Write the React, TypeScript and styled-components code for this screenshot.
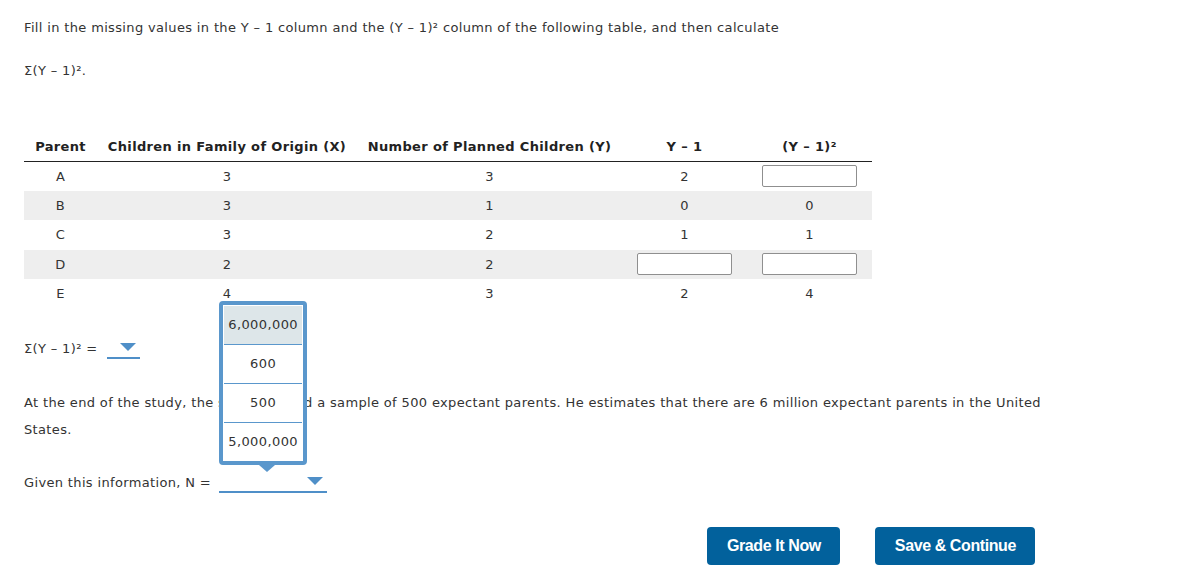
import React from "react";
import styled, { createGlobalStyle } from "styled-components";

const Global = createGlobalStyle`
  html, body { margin: 0; padding: 0; background: #fff; }
  body { font-family: "DejaVu Sans", Verdana, sans-serif; font-size: 13px; letter-spacing: 0.35px; color: #333; }
`;

const Page = styled.div`
  width: 1022px;
  padding: 0 0 0 24px;
`;

const Line = styled.div<{ $mt: number; $lh?: number }>`
  margin-top: ${(p) => p.$mt}px;
  line-height: ${(p) => p.$lh ?? 20}px;
`;

const Table = styled.table`
  margin-top: 52px;
  width: 848px;
  border-collapse: collapse;
`;

const Th = styled.th<{ $w: number }>`
  width: ${(p) => p.$w}px;
  height: 27px;
  padding: 0 0 1px;
  font-weight: bold;
  text-align: center;
  border-bottom: 1px solid #222;
  color: #222;
  white-space: nowrap;
`;

const Tr = styled.tr<{ $shade: boolean }>`
  background: ${(p) => (p.$shade ? "#eeeeee" : "#fff")};
  height: 29.4px;
`;

const Td = styled.td`
  padding: 0;
  text-align: center;
  vertical-align: middle;
`;

const Box = styled.span`
  display: inline-block;
  width: 93px;
  height: 20px;
  border: 1px solid #8f8f8f;
  border-radius: 2px;
  background: #fff;
  vertical-align: middle;
`;

const Select = styled.span<{ $w: number }>`
  position: relative;
  display: inline-block;
  width: ${(p) => p.$w}px;
  height: 17px;
  margin-left: ${(p) => (p.$w > 50 ? 8 : 10)}px;
  border-bottom: 2px solid #4f8fc8;
  vertical-align: -6px;
`;

const Arrow = styled.span`
  position: absolute;
  right: 4px;
  top: 3px;
  width: 0;
  height: 0;
  border-left: 8px solid transparent;
  border-right: 8px solid transparent;
  border-top: 8px solid #4f8fc8;
`;

const Popup = styled.div`
  position: absolute;
  left: 0;
  bottom: 26px;
  width: 80px;
  border: 4px solid #5a97cc;
  border-radius: 4px;
  background: #fff;
  padding: 0;
  z-index: 5;
`;

const Caret = styled.span`
  position: absolute;
  left: 36px;
  bottom: -11px;
  width: 0;
  height: 0;
  border-left: 8px solid transparent;
  border-right: 8px solid transparent;
  border-top: 7px solid #5a97cc;
`;

const Option = styled.div<{ $active?: boolean }>`
  height: 38px;
  line-height: 38px;
  text-align: center;
  letter-spacing: 0.4px;
  background: ${(p) => (p.$active ? "#dde6e9" : "#fff")};
  border-top: 1px solid #5a97cc;
  margin: 0 1px;
  &:first-child { border-top: none; margin-top: 1px; }
  &:last-child { margin-bottom: 1px; }
`;

const Footer = styled.div`
  display: flex;
  justify-content: flex-end;
  gap: 35px;
  margin-top: 34px;
  padding-right: 11px;
`;

const Button = styled.button`
  height: 38px;
  padding: 0 19px 0 20px;
  border: none;
  border-radius: 4px;
  background: #02619c;
  color: #fff;
  font-family: "Liberation Sans", Arial, sans-serif;
  font-weight: bold;
  font-size: 16px;
  letter-spacing: -0.4px;
`;

const rows = [
  { p: "A", x: "3", y: "3", y1: "2", y2: null },
  { p: "B", x: "3", y: "1", y1: "0", y2: "0" },
  { p: "C", x: "3", y: "2", y1: "1", y2: "1" },
  { p: "D", x: "2", y: "2", y1: null, y2: null },
  { p: "E", x: "4", y: "3", y1: "2", y2: "4" },
];

export default function App() {
  return (
    <>
      <Global />
      <Page>
        <Line $mt={18}>
          Fill in the missing values in the Y – 1 column and the (Y – 1)² column of the following table, and then calculate
        </Line>
        <Line $mt={23}>Σ(Y – 1)².</Line>
        <Table>
          <thead>
            <tr>
              <Th $w={73}>Parent</Th>
              <Th $w={260}>Children in Family of Origin (X)</Th>
              <Th $w={265}>Number of Planned Children (Y)</Th>
              <Th $w={125}>Y – 1</Th>
              <Th $w={125}>(Y – 1)²</Th>
            </tr>
          </thead>
          <tbody>
            {rows.map((r, i) => (
              <Tr key={r.p} $shade={i % 2 === 1}>
                <Td>{r.p}</Td>
                <Td>{r.x}</Td>
                <Td>{r.y}</Td>
                <Td>{r.y1 ?? <Box />}</Td>
                <Td>{r.y2 ?? <Box />}</Td>
              </Tr>
            ))}
          </tbody>
        </Table>
        <Line $mt={31}>
          Σ(Y – 1)² =
          <Select $w={33}>
            <Arrow />
          </Select>
        </Line>
        <Line $mt={30} $lh={27}>
          At the end of the study, the scientist used a sample of 500 expectant parents. He estimates that there are 6 million expectant parents in the United States.
        </Line>
        <Line $mt={30}>
          Given this information, N =
          <Select $w={108}>
            <Arrow />
            <Popup>
              <Option $active>6,000,000</Option>
              <Option>600</Option>
              <Option>500</Option>
              <Option>5,000,000</Option>
              <Caret />
            </Popup>
          </Select>
        </Line>
        <Footer>
          <Button>Grade It Now</Button>
          <Button>Save &amp; Continue</Button>
        </Footer>
      </Page>
    </>
  );
}
